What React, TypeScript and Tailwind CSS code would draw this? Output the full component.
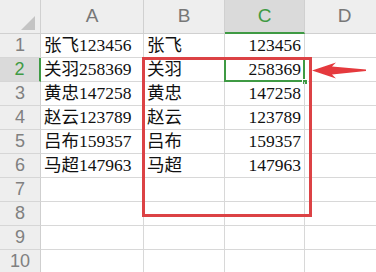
const cols = ['A', 'B', 'C', 'D'];

const rows: [string, string, string][] = [
  ['张飞123456', '张飞', '123456'],
  ['关羽258369', '关羽', '258369'],
  ['黄忠147258', '黄忠', '147258'],
  ['赵云123789', '赵云', '123789'],
  ['吕布159357', '吕布', '159357'],
  ['马超147963', '马超', '147963'],
  ['', '', ''],
  ['', '', ''],
  ['', '', ''],
  ['', '', ''],
];

const cellFont = { fontFamily: '"Liberation Serif", "Noto Sans CJK SC", serif' };

export default function App() {
  return (
    <div className="relative w-[376px] h-[272px] overflow-hidden bg-white">
      <div className="grid grid-cols-[41px_103px_81px_80px_80px] grid-rows-[34px_repeat(10,24px)]">
        {/* Corner */}
        <div className="relative bg-[#eeeeee] border-r border-b border-[#d0d0d0]">
          <div className="absolute right-[5px] bottom-[3px] w-0 h-0 border-l-[14px] border-l-transparent border-b-[14px] border-b-[#c4c4c4]" />
        </div>

        {/* Column headers */}
        {cols.map((c) => {
          const active = c === 'C';
          return (
            <div
              key={c}
              className={`flex items-center justify-center border-r border-[#d0d0d0] text-[19px] font-['Liberation_Sans',sans-serif] font-light ${
                active
                  ? 'bg-[#dadada] text-[#3f9a44] border-b-2 border-b-[#3f9a44]'
                  : 'bg-[#eeeeee] text-[#777777] border-b border-b-[#d0d0d0]'
              }`}
            >
              {c}
            </div>
          );
        })}

        {rows.map((r, i) => {
          const n = i + 1;
          const active = n === 2;
          return [
            <div
              key={`h${n}`}
              className={`flex items-center justify-center border-b border-[#d6d6d6] text-[18px] font-['Liberation_Sans',sans-serif] ${
                active
                  ? 'bg-[#dadada] text-[#3f9a44] border-r-2 border-r-[#3f9a44]'
                  : 'bg-[#eeeeee] text-[#808080] border-r border-r-[#cfcfcf]'
              }`}
            >
              {n}
            </div>,
            <div
              key={`a${n}`}
              style={cellFont}
              className="flex items-center pl-[3px] border-r border-b border-[#d8d8d8] text-[17.5px] text-[#111] whitespace-nowrap"
            >
              {r[0]}
            </div>,
            <div
              key={`b${n}`}
              style={cellFont}
              className="flex items-center pl-[3px] border-r border-b border-[#d8d8d8] text-[17.5px] text-[#111] whitespace-nowrap"
            >
              {r[1]}
            </div>,
            <div
              key={`c${n}`}
              style={cellFont}
              className="relative flex items-center justify-end pr-[3px] border-r border-b border-[#d8d8d8] text-[17.5px] text-[#111] whitespace-nowrap"
            >
              {r[2]}
              {active && (
                <>
                  <div className="absolute -left-px -top-px -right-px -bottom-px border-2 border-[#3f9a44]" />
                  <div className="absolute right-[-4px] bottom-[-4px] w-[6px] h-[6px] bg-[#3f9a44] border border-white" />
                </>
              )}
            </div>,
            <div key={`d${n}`} className="border-r border-b border-[#d8d8d8]" />,
          ];
        })}
      </div>

      {/* Annotation: red rectangle */}
      <div className="absolute left-[142px] top-[57px] w-[170px] h-[160px] border-[3px] border-[#dc4245]" />

      {/* Annotation: arrow */}
      <svg className="absolute left-0 top-0" width="376" height="272" viewBox="0 0 376 272">
        <path d="M312 70.5 L336 62.5 L332 66.5 L366 69.5 L366 71 L332 74.5 L336 78.5 Z" fill="#e5393d" />
      </svg>
    </div>
  );
}
